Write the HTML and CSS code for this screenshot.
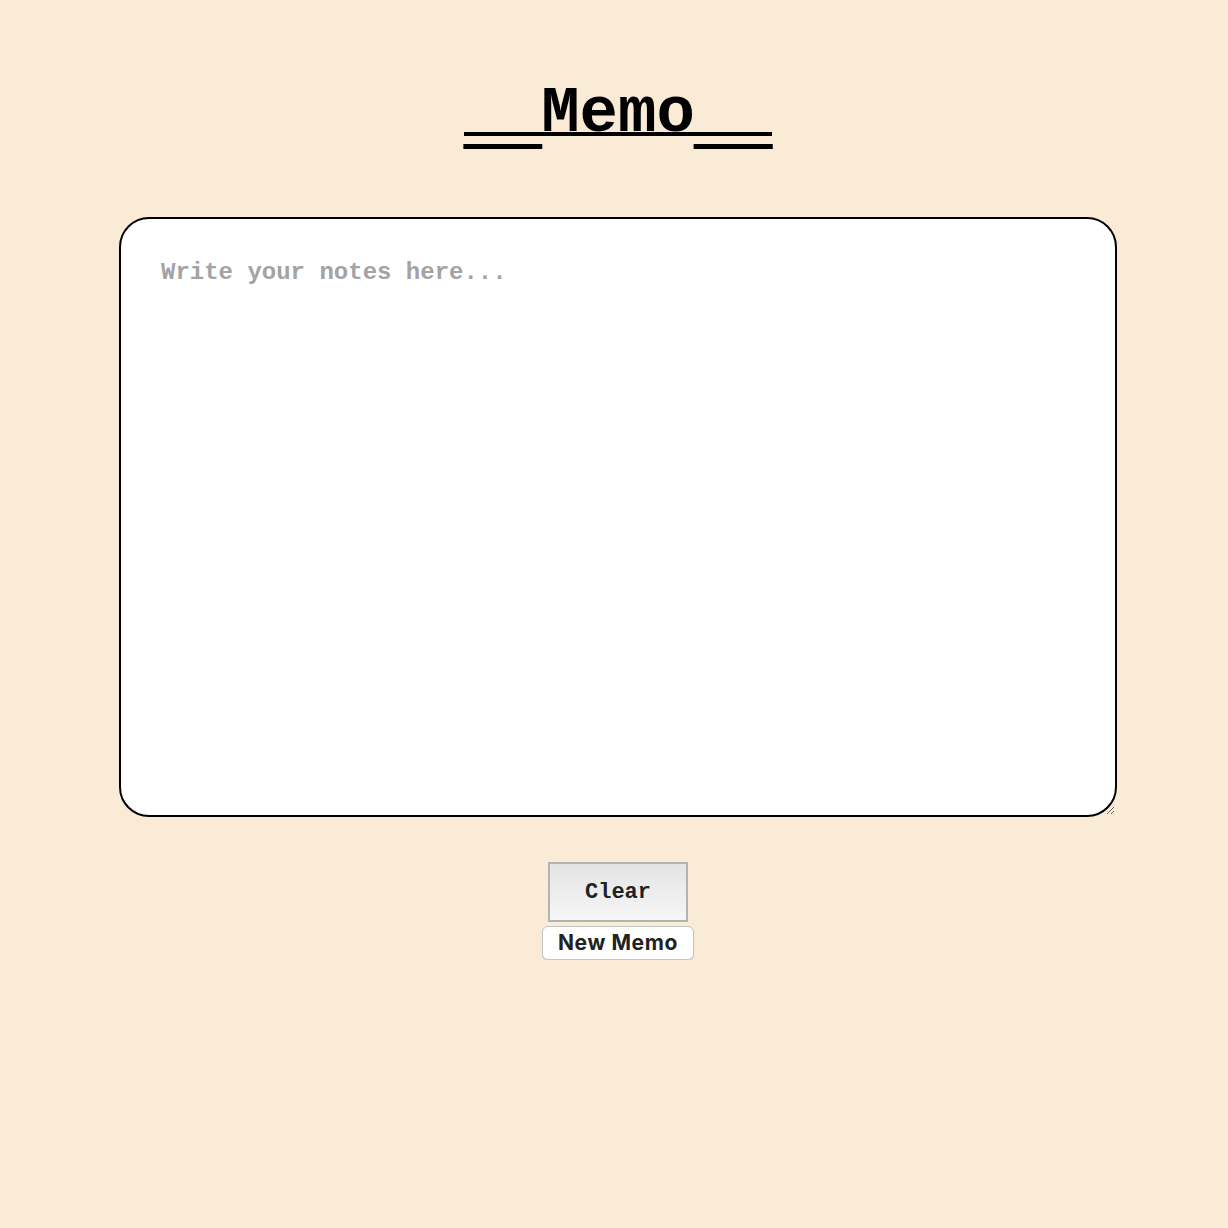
FILE: index.html
```html
<!DOCTYPE html>
<html lang="en">
<head>
<meta charset="utf-8">
<title>Memo</title>
<link rel="stylesheet" href="styles.css">
</head>
<body>
<main class="app">
  <h1 class="title"><span class="us">__</span>Memo<span class="us">__</span></h1>
  <textarea class="memo" placeholder="Write your notes here..."></textarea>
  <button class="btn-clear" type="button">Clear</button>
  <button class="btn-new" type="button">New Memo</button>
</main>
</body>
</html>
```

FILE: styles.css
```css
html, body {
  background: #faebd7;
}
body {
  margin: 0;
  padding: 0 0 0 8px;
}
.app {
  display: flex;
  flex-direction: column;
  align-items: center;
  padding-top: 96px;
}
.title {
  margin: 0 0 81px;
  font-family: "Courier New", "Liberation Mono", monospace;
  font-weight: bold;
  font-size: 64px;
  line-height: 36px;
  color: #000;
  border-bottom: 4px solid #000;
}
.us {
  display: inline-block;
  line-height: 0;
  height: 0;
  vertical-align: -10px;
  -webkit-text-stroke: 2px #000;
}
.memo {
  box-sizing: border-box;
  width: 998px;
  height: 600px;
  margin: 0;
  padding: 40px;
  border: 2px solid #000;
  border-radius: 30px;
  background: #fff;
  font-family: "Courier New", "Liberation Mono", monospace;
  font-weight: bold;
  font-size: 24px;
  line-height: 27px;
  color: #000;
  outline: none;
}
.memo::placeholder {
  color: #a3a3a3;
  opacity: 1;
}
.btn-clear {
  box-sizing: border-box;
  width: 140px;
  height: 60px;
  margin: 45px 0 0;
  padding: 0;
  border: 2px solid #b3b3b3;
  border-radius: 0;
  background: linear-gradient(#e4e4e4, #f6f6f6);
  font-family: "Courier New", "Liberation Mono", monospace;
  font-weight: bold;
  font-size: 22px;
  color: #222;
}
.btn-new {
  box-sizing: border-box;
  width: 152px;
  height: 34px;
  margin: 4px 0 0;
  padding: 0;
  border: 1px solid #c4c4c4;
  border-radius: 6px;
  background: #fff;
  box-shadow: 0 1px 1px rgba(0, 0, 0, 0.12);
  font-family: Inter, "Liberation Sans", sans-serif;
  font-weight: 700;
  font-size: 21px;
  letter-spacing: 0.6px;
  line-height: 26px;
  color: #222;
}
```
